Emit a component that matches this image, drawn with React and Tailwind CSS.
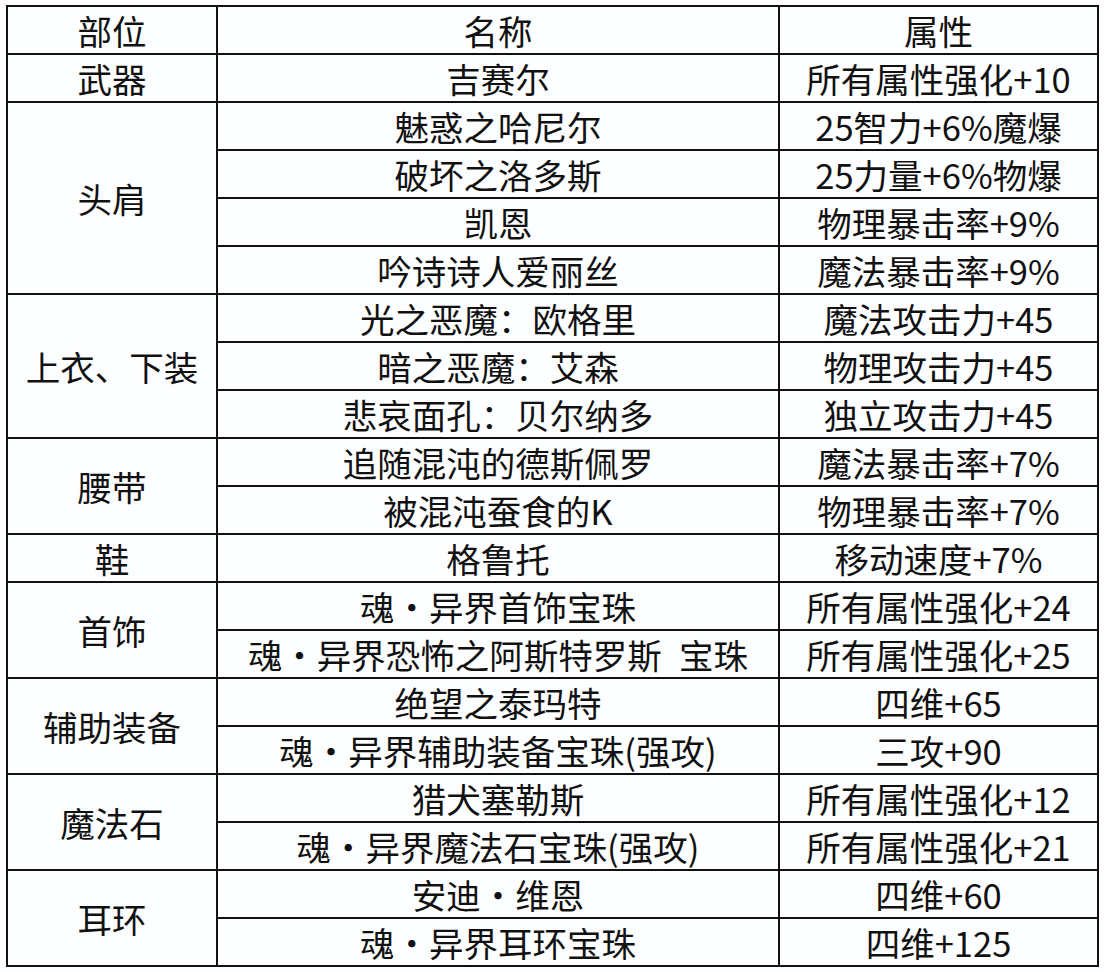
const rows = [
  { part: "武器", span: 1, items: [["吉赛尔", "所有属性强化+10"]] },
  {
    part: "头肩",
    span: 4,
    items: [
      ["魅惑之哈尼尔", "25智力+6%魔爆"],
      ["破坏之洛多斯", "25力量+6%物爆"],
      ["凯恩", "物理暴击率+9%"],
      ["吟诗诗人爱丽丝", "魔法暴击率+9%"],
    ],
  },
  {
    part: "上衣、下装",
    span: 3,
    items: [
      ["光之恶魔：欧格里", "魔法攻击力+45"],
      ["暗之恶魔：艾森", "物理攻击力+45"],
      ["悲哀面孔：贝尔纳多", "独立攻击力+45"],
    ],
  },
  {
    part: "腰带",
    span: 2,
    items: [
      ["追随混沌的德斯佩罗", "魔法暴击率+7%"],
      ["被混沌蚕食的K", "物理暴击率+7%"],
    ],
  },
  { part: "鞋", span: 1, items: [["格鲁托", "移动速度+7%"]] },
  {
    part: "首饰",
    span: 2,
    items: [
      ["魂・异界首饰宝珠", "所有属性强化+24"],
      ["魂・异界恐怖之阿斯特罗斯\u2002宝珠", "所有属性强化+25"],
    ],
  },
  {
    part: "辅助装备",
    span: 2,
    items: [
      ["绝望之泰玛特", "四维+65"],
      ["魂・异界辅助装备宝珠(强攻)", "三攻+90"],
    ],
  },
  {
    part: "魔法石",
    span: 2,
    items: [
      ["猎犬塞勒斯", "所有属性强化+12"],
      ["魂・异界魔法石宝珠(强攻)", "所有属性强化+21"],
    ],
  },
  {
    part: "耳环",
    span: 2,
    items: [
      ["安迪・维恩", "四维+60"],
      ["魂・异界耳环宝珠", "四维+125"],
    ],
  },
];

const cell = "border-2 border-[#111] text-center align-middle p-0 leading-none whitespace-nowrap";

export default function App() {
  return (
    <div
      className="w-[1104px] h-[972px] bg-[#fdfeff] pt-[5px] pl-[6px] text-[#111] text-[34.5px]"
      style={{ fontFamily: '"Noto Sans CJK SC", "Noto Sans", sans-serif' }}
    >
      <table className="border-collapse table-fixed w-[1091px]">
        <colgroup>
          <col className="w-[210px]" />
          <col className="w-[562px]" />
          <col className="w-[319px]" />
        </colgroup>
        <tbody>
          <tr className="h-[48px]">
            <td className={cell}>部位</td>
            <td className={cell}>名称</td>
            <td className={cell}>属性</td>
          </tr>
          {rows.map((group) =>
            group.items.map((item, i) => (
              <tr key={group.part + i} className="h-[48px]">
                {i === 0 && (
                  <td className={cell} rowSpan={group.span}>
                    {group.part}
                  </td>
                )}
                <td className={cell}>{item[0]}</td>
                <td className={cell}>{item[1]}</td>
              </tr>
            ))
          )}
        </tbody>
      </table>
    </div>
  );
}
